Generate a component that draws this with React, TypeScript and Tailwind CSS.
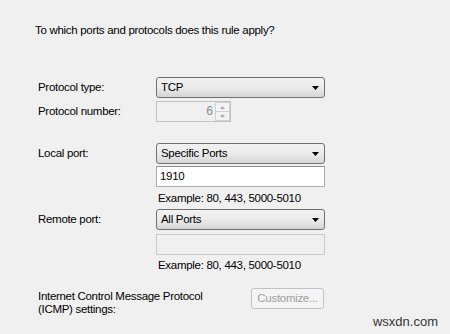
import React from 'react'

const font = { fontFamily: '"Liberation Sans", Arial, sans-serif' }

const Arrow = () => (
  <svg width="7" height="4" viewBox="0 0 7 4" className="absolute right-[5px] top-[8px]">
    <path d="M0 0H7L3.5 4Z" fill="#000" />
  </svg>
)

const Combo = ({ value }: { value: string }) => (
  <div className="relative h-[21px] w-[169px] rounded-[3px] border border-[#707070] bg-gradient-to-b from-[#f2f2f2] via-[#ebebeb] to-[#d6d6d6] pl-[4px] text-[11.5px] leading-[19px] tracking-[-0.3px] text-black">
    {value}
    <Arrow />
  </div>
)

const Label = ({ children }: { children: React.ReactNode }) => (
  <div className="w-[121px] pl-[3px] text-[11.5px] tracking-[-0.3px] text-black">{children}</div>
)

export default function App() {
  return (
    <div className="relative h-[334px] w-[450px] overflow-hidden bg-[#f0f0f0] pl-[35px] pt-[22px]" style={font}>
      <div className="text-[11.5px] leading-[16px] tracking-[-0.3px] text-black">To which ports and protocols does this rule apply?</div>

      <div className="mt-[39px] flex items-center">
        <Label>Protocol type:</Label>
        <Combo value="TCP" />
      </div>

      <div className="mt-[3px] flex items-center">
        <Label>Protocol number:</Label>
        <div className="flex h-[21px] w-[75px] items-stretch border border-[#c2c2c2] bg-[#f0f0f0]">
          <div className="flex-1 pr-[2px] text-right text-[12px] leading-[19px] text-[#8a8a8a]">6</div>
          <div className="flex w-[15px] flex-col">
            <div className="flex flex-1 items-center justify-center border border-[#d0d0d0] bg-[#f4f4f4]">
              <svg width="5" height="3" viewBox="0 0 5 3"><path d="M0 3H5L2.5 0Z" fill="#a8a8a8" /></svg>
            </div>
            <div className="flex flex-1 items-center justify-center border border-t-0 border-[#d0d0d0] bg-[#f4f4f4]">
              <svg width="5" height="3" viewBox="0 0 5 3"><path d="M0 0H5L2.5 3Z" fill="#a8a8a8" /></svg>
            </div>
          </div>
        </div>
      </div>

      <div className="mt-[21px] flex items-center">
        <Label>Local port:</Label>
        <Combo value="Specific Ports" />
      </div>
      <div className="mt-[2px] ml-[121px] h-[21px] w-[169px] border border-[#abadb3] border-t-[#8e8f8f] bg-white pl-[3px] text-[11.5px] leading-[19px] tracking-[-0.3px] text-black">1910</div>
      <div className="ml-[123px] mt-[4px] text-[11.5px] leading-[15px] tracking-[-0.3px] text-black">Example: 80, 443, 5000-5010</div>

      <div className="mt-[3px] flex items-center">
        <Label>Remote port:</Label>
        <Combo value="All Ports" />
      </div>
      <div className="mt-[4px] ml-[121px] h-[21px] w-[169px] border border-[#c9c9c9] bg-[#f0f0f0]" />
      <div className="ml-[123px] mt-[3px] text-[11.5px] leading-[15px] tracking-[-0.3px] text-black">Example: 80, 443, 5000-5010</div>

      <div className="mt-[15px] flex items-start">
        <div className="w-[216px] pl-[3px] pt-[2px] text-[11.5px] leading-[13px] tracking-[-0.3px] text-black">
          Internet Control Message Protocol
          <br />
          (ICMP) settings:
        </div>
        <div className="h-[21px] w-[73px] rounded-[3px] border border-[#c2c2c2] bg-[#f4f4f4] text-center text-[11.5px] leading-[19px] tracking-[-0.3px] text-[#a0a0a0]">
          Customize...
        </div>
      </div>

      <div className="absolute bottom-[5px] right-[12px] text-[13px] leading-[15px] text-[#333]">wsxdn.com</div>
    </div>
  )
}
